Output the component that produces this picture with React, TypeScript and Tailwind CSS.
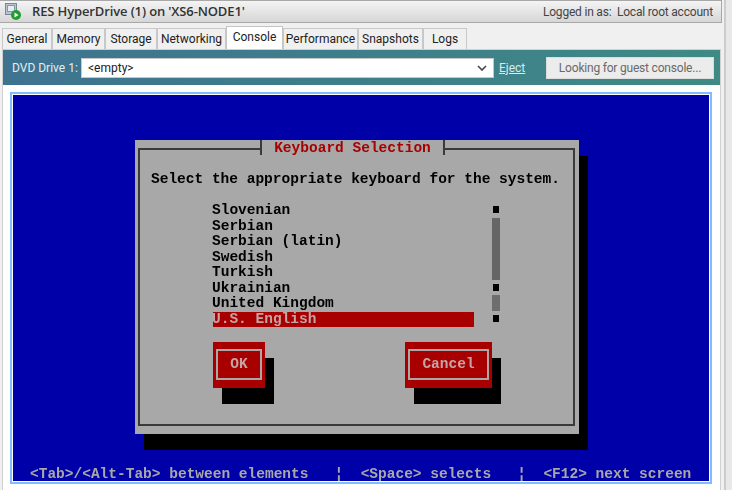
const tabs = [
  { name: 'General', width: 'w-[50px]' },
  { name: 'Memory', width: 'w-[53px]' },
  { name: 'Storage', width: 'w-[52px]' },
  { name: 'Networking', width: 'w-[69px]' },
  { name: 'Console', width: 'w-[57px]' },
  { name: 'Performance', width: 'w-[75px]' },
  { name: 'Snapshots', width: 'w-[65px]' },
  { name: 'Logs', width: 'w-[44px]' },
];
const layouts = ['Slovenian', 'Serbian', 'Serbian (latin)', 'Swedish', 'Turkish', 'Ukrainian', 'United Kingdom'];

function ServerIcon() {
  return (
    <svg width="18" height="18" viewBox="0 0 18 18" className="shrink-0">
      <rect x="0.5" y="0.5" width="11" height="11" fill="#b8c4d0" stroke="#7a8794" />
      <rect x="2.5" y="2.5" width="7" height="6" fill="#e6edf3" stroke="#8a97a4" />
      <circle cx="11" cy="12" r="5" fill="#1f9e2e" />
      <path d="M9.5 9.5v5l4-2.5z" fill="#fff" />
    </svg>
  );
}

function TermButton({ label, width }: { label: string; width: string }) {
  return (
    <div className={`${width} h-[46px] bg-[#a80000] p-[3px] pt-[7px] pb-[8px] shadow-[9px_16px_0_#000]`}>
      <div className="h-full border-2 border-[#a8a8a8] flex items-center justify-center text-[#c4a4a4]">{label}</div>
    </div>
  );
}

export default function App() {
  return (
    <div className="w-[732px] h-[490px] overflow-hidden bg-[#f0f0f0] flex font-['Roboto',sans-serif]">
      <div className="w-[722px] shrink-0 flex flex-col">
        <div className="h-[23px] shrink-0 border-y border-[#a8a8a8] border-r bg-gradient-to-b from-[#f4f4f4] to-[#d6d6d6] flex items-center pl-[5px] pr-[8px] text-[#333]">
          <ServerIcon />
          <span className="ml-[9px] text-[13px] font-semibold font-['Open_Sans',sans-serif] tracking-[-0.13px]">RES HyperDrive (1) on 'XS6-NODE1'</span>
          <span className="ml-auto text-[12px] tracking-[-0.2px] text-[#444]">Logged in as:&nbsp; Local root account</span>
        </div>
        <div className="h-[26px] shrink-0 flex items-end pl-[2px] text-[12px] text-[#222]">
          {tabs.map((t) =>
            t.name === 'Console' ? (
              <div key={t.name} className={`${t.width} h-[23px] pb-[2px] bg-white border border-b-0 border-[#c4c4c4] flex items-center justify-center`}>{t.name}</div>
            ) : (
              <div key={t.name} className={`${t.width} h-[21px] pb-[1px] bg-[#f0f0f0] border border-b-0 border-[#c8c8c8] flex items-center justify-center`}>{t.name}</div>
            ),
          )}
        </div>
        <div className="flex-1 min-h-0 bg-white ml-[2px] mr-[1px] border-x border-t border-[#d0d0d0] flex flex-col">
          <div className="h-[35px] shrink-0 bg-gradient-to-r from-[#3e7390] to-[#3f8a85] flex items-center pl-[9px] pr-[6px] text-[12px]">
            <span className="w-[69px] text-[#e4eef0]">DVD Drive 1:</span>
            <div className="w-[413px] h-[20px] bg-white border border-[#c8c8c8] flex items-center pl-[6px] pr-[6px] text-[#222]">
              <span>&lt;empty&gt;</span>
              <svg width="10" height="6" viewBox="0 0 10 6" className="ml-auto">
                <path d="M1 1l4 4 4-4" fill="none" stroke="#444" strokeWidth="1.6" />
              </svg>
            </div>
            <span className="ml-[5px] text-[#d6ecf0] underline">Eject</span>
            <div className="ml-auto w-[168px] h-[22px] bg-[#ececec] border border-[#dcdcdc] flex items-center justify-center tracking-[-0.2px] text-[#6a6a6a]">Looking for guest console...</div>
          </div>
          <div className="mt-[7px] ml-[7px] w-[702px] h-[392px] border-2 border-[#80bcff] p-[1px] bg-white">
            <div className="w-full h-full bg-[#0000a8] flex flex-col font-['Liberation_Mono',monospace] font-bold text-[14.5px] leading-[15.45px] blur-[0.35px]">
              <div className="ml-[122px] mt-[45px] w-[444px] h-[294px] bg-[#a8a8a8] shadow-[9px_16px_0_#000] pl-[3px] pr-[4px] pt-[8px] pb-[8px] shrink-0">
                <div className="relative h-full border-2 border-[#3a3a3a] text-black">
                  <div className="absolute left-[120px] top-[-10px] w-[185px] h-[15px] pt-[1px] bg-[#a8a8a8] border-x-2 border-[#3a3a3a] text-center text-[#a80000]">Keyboard Selection</div>
                  <div className="ml-[11px] mt-[22px] whitespace-pre">Select the appropriate keyboard for the system.</div>
                  <div className="flex mt-[16px] ml-[72px]">
                    <div className="w-[262px]">
                      {layouts.map((l) => (
                        <div key={l} className="h-[15.45px] whitespace-pre">{l}</div>
                      ))}
                      <div className="h-[15.45px] ml-[1px] bg-[#a80000] text-[#c4a4a4] whitespace-pre -indent-[1px]">U.S. English</div>
                    </div>
                    <div className="ml-[18px] w-[8px] flex flex-col items-center pt-[3px]">
                      <div className="w-[6px] h-[7px] bg-black shrink-0" />
                      <div className="w-[8px] h-[62px] mt-[5px] bg-[#666] shrink-0" />
                      <div className="w-[6px] h-[7px] mt-[4px] bg-black shrink-0" />
                      <div className="w-[8px] h-[16px] mt-[4px] bg-[#6e6e6e] shrink-0" />
                      <div className="w-[6px] h-[7px] mt-[4px] bg-black shrink-0" />
                    </div>
                  </div>
                  <div className="flex mt-[15px] ml-[73px]">
                    <TermButton label="OK" width="w-[52px]" />
                    <div className="ml-[140px]">
                      <TermButton label="Cancel" width="w-[87px]" />
                    </div>
                  </div>
                </div>
              </div>
              <div className="mt-[33px] ml-[17px] whitespace-pre text-[#a8a8a8]">{'<Tab>/<Alt-Tab> between elements   ¦  <Space> selects   ¦  <F12> next screen'}</div>
            </div>
          </div>
        </div>
      </div>
      <div className="w-[2px] h-full" />
      <div className="flex-1 h-full border-l-2 border-[#cccccc] bg-[#e8e8e8]" />
    </div>
  );
}
